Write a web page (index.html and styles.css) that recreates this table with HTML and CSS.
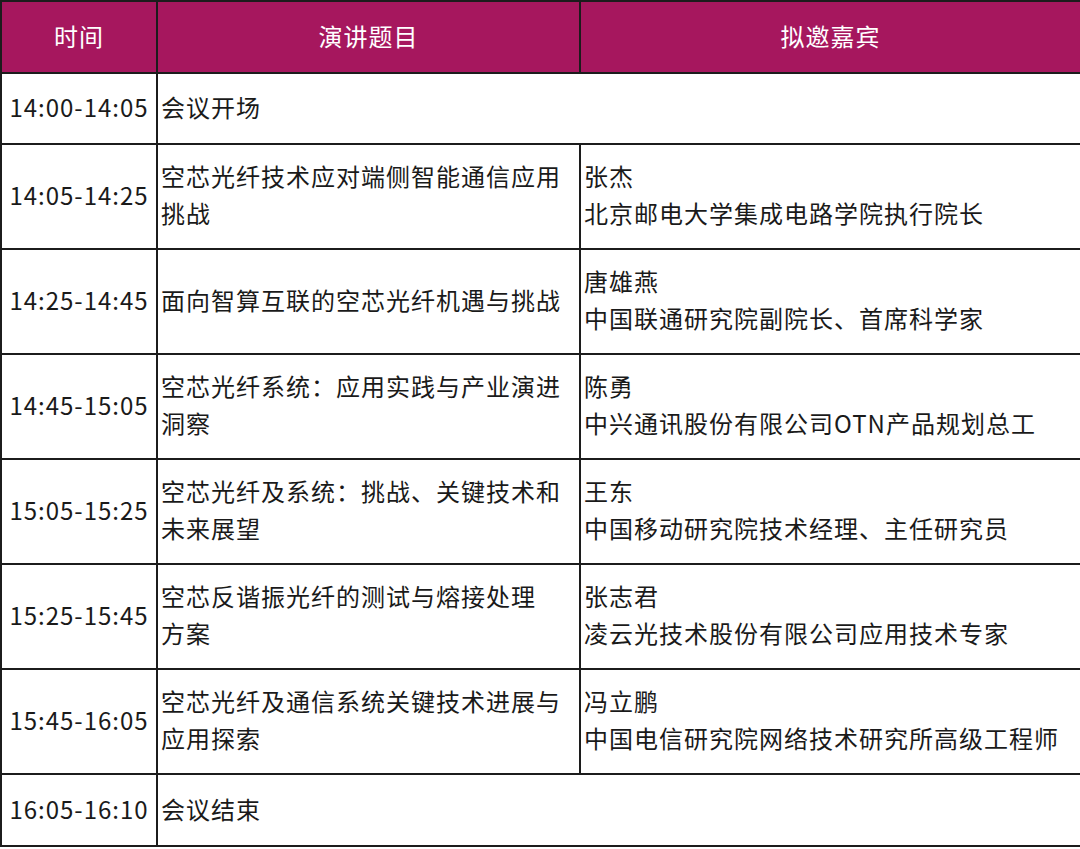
FILE: index.html
```html
<!DOCTYPE html>
<html lang="zh">
<head>
<meta charset="utf-8">
<link rel="stylesheet" href="styles.css">
</head>
<body>
<table class="agenda">
  <colgroup>
    <col class="c-time">
    <col class="c-topic">
    <col class="c-guest">
  </colgroup>
  <thead>
    <tr class="head">
      <th>时间</th>
      <th>演讲题目</th>
      <th>拟邀嘉宾</th>
    </tr>
  </thead>
  <tbody>
    <tr class="short">
      <td class="time">14:00-14:05</td>
      <td colspan="2">会议开场</td>
    </tr>
    <tr>
      <td class="time">14:05-14:25</td>
      <td>空芯光纤技术应对端侧智能通信应用<br>挑战</td>
      <td>张杰<br>北京邮电大学集成电路学院执行院长</td>
    </tr>
    <tr>
      <td class="time">14:25-14:45</td>
      <td>面向智算互联的空芯光纤机遇与挑战</td>
      <td>唐雄燕<br>中国联通研究院副院长、首席科学家</td>
    </tr>
    <tr>
      <td class="time">14:45-15:05</td>
      <td>空芯光纤系统：应用实践与产业演进<br>洞察</td>
      <td>陈勇<br>中兴通讯股份有限公司OTN产品规划总工</td>
    </tr>
    <tr>
      <td class="time">15:05-15:25</td>
      <td>空芯光纤及系统：挑战、关键技术和<br>未来展望</td>
      <td>王东<br>中国移动研究院技术经理、主任研究员</td>
    </tr>
    <tr>
      <td class="time">15:25-15:45</td>
      <td>空芯反谐振光纤的测试与熔接处理<br>方案</td>
      <td>张志君<br>凌云光技术股份有限公司应用技术专家</td>
    </tr>
    <tr>
      <td class="time">15:45-16:05</td>
      <td>空芯光纤及通信系统关键技术进展与<br>应用探索</td>
      <td>冯立鹏<br>中国电信研究院网络技术研究所高级工程师</td>
    </tr>
    <tr class="short last">
      <td class="time">16:05-16:10</td>
      <td colspan="2">会议结束</td>
    </tr>
  </tbody>
</table>
</body>
</html>
```

FILE: styles.css
```css
html, body {
  margin: 0;
  padding: 0;
  background: #ffffff;
}

.agenda {
  width: 1080px;
  border-collapse: collapse;
  table-layout: fixed;
  font-family: "Noto Sans CJK SC", "Noto Sans", sans-serif;
  font-size: 24px;
  line-height: 37px;
  color: #1a1a1a;
}

.c-time { width: 156px; }
.c-topic { width: 423px; }
.c-guest { width: 501px; }

.agenda th,
.agenda td {
  border: 2px solid #1c1c1c;
  padding: 12px 3px 17px;
  vertical-align: middle;
  text-align: left;
  white-space: nowrap;
  letter-spacing: 1px;
}

.agenda .head th {
  background: #a6175e;
  color: #ffffff;
  font-weight: 400;
  text-align: center;
  padding: 15px 3px 18px;
}

.agenda tr.short td {
  padding: 14px 3px 18px;
}

.agenda tr.last td {
  padding: 15px 3px 18px;
}

.agenda td.time {
  text-align: center;
  padding-left: 0;
  padding-right: 0;
}
```
